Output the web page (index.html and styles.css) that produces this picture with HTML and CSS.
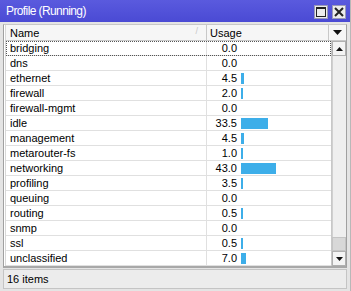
FILE: index.html
```html
<!DOCTYPE html>
<html>
<head>
<meta charset="utf-8">
<link rel="stylesheet" href="styles.css">
</head>
<body>
<div class="win">
  <div class="title">
    <span class="title-text">Profile (Running)</span>
    <div class="tbtns">
      <span class="tbtn"><svg width="10" height="10" viewBox="0 0 10 10"><rect x="0.5" y="0.5" width="9" height="9" fill="none" stroke="#222" stroke-width="1"/><rect x="0" y="0" width="10" height="2" fill="#222"/></svg></span>
      <span class="tbtn"><svg width="10" height="10" viewBox="0 0 10 10"><path d="M1 1 L9 9 M9 1 L1 9" stroke="#222" stroke-width="2"/></svg></span>
    </div>
  </div>
  <div class="main">
    <div class="table">
      <div class="head">
        <div class="hname">Name<span class="sort">/</span></div>
        <div class="husage">Usage</div>
        <div class="hcorner"><svg width="9" height="5" viewBox="0 0 9 5"><path d="M0 0 H9 L4.5 5 Z" fill="#111"/></svg></div>
      </div>
      <div class="bodyrow">
        <div class="rows">
          <div class="row focus"><div class="cname">bridging</div><div class="cuse"><span class="num">0.0</span></div></div>
          <div class="row"><div class="cname">dns</div><div class="cuse"><span class="num">0.0</span></div></div>
          <div class="row"><div class="cname">ethernet</div><div class="cuse"><span class="num">4.5</span><span class="bar" style="width:3px"></span></div></div>
          <div class="row"><div class="cname">firewall</div><div class="cuse"><span class="num">2.0</span><span class="bar" style="width:2px"></span></div></div>
          <div class="row"><div class="cname">firewall-mgmt</div><div class="cuse"><span class="num">0.0</span></div></div>
          <div class="row"><div class="cname">idle</div><div class="cuse"><span class="num">33.5</span><span class="bar" style="width:27px"></span></div></div>
          <div class="row"><div class="cname">management</div><div class="cuse"><span class="num">4.5</span><span class="bar" style="width:3px"></span></div></div>
          <div class="row"><div class="cname">metarouter-fs</div><div class="cuse"><span class="num">1.0</span><span class="bar" style="width:2px"></span></div></div>
          <div class="row"><div class="cname">networking</div><div class="cuse"><span class="num">43.0</span><span class="bar" style="width:35px"></span></div></div>
          <div class="row"><div class="cname">profiling</div><div class="cuse"><span class="num">3.5</span><span class="bar" style="width:2px"></span></div></div>
          <div class="row"><div class="cname">queuing</div><div class="cuse"><span class="num">0.0</span></div></div>
          <div class="row"><div class="cname">routing</div><div class="cuse"><span class="num">0.5</span><span class="bar" style="width:2px"></span></div></div>
          <div class="row"><div class="cname">snmp</div><div class="cuse"><span class="num">0.0</span></div></div>
          <div class="row"><div class="cname">ssl</div><div class="cuse"><span class="num">0.5</span><span class="bar" style="width:2px"></span></div></div>
          <div class="row"><div class="cname">unclassified</div><div class="cuse"><span class="num">7.0</span><span class="bar" style="width:5px"></span></div></div>
        </div>
        <div class="vscroll">
          <div class="sbtn"><svg width="7" height="4" viewBox="0 0 7 4"><path d="M3.5 0 L7 4 H0 Z" fill="#111"/></svg></div>
          <div class="track"></div>
          <div class="thumb"></div>
          <div class="sbtn"><svg width="7" height="4" viewBox="0 0 7 4"><path d="M0 0 H7 L3.5 4 Z" fill="#111"/></svg></div>
        </div>
      </div>
    </div>
    <div class="status">16 items</div>
  </div>
</div>
</body>
</html>
```

FILE: styles.css
```css
html, body {
  margin: 0;
  padding: 0;
}
body {
  width: 351px;
  height: 291px;
  background: #e4e4e4;
  font-family: "Liberation Sans", Arial, sans-serif;
  font-size: 11px;
  color: #000;
  overflow: hidden;
}
.win {
  display: flex;
  flex-direction: column;
  height: 291px;
  box-sizing: border-box;
  border-right: 1px solid #b8b8b8;
}
.title {
  height: 22px;
  background: linear-gradient(#5a5ade, #4a4ad4);
  display: flex;
  align-items: center;
  justify-content: space-between;
  padding: 0 4px 0 6px;
  box-sizing: border-box;
}
.title-text {
  color: #fff;
  font-size: 12px;
  letter-spacing: -0.6px;
}
.tbtns {
  display: flex;
  gap: 4px;
  padding-top: 2px;
}
.tbtn {
  width: 12px;
  height: 12px;
  background: #ececec;
  border: 1px solid #9a9ab8;
  display: flex;
  align-items: center;
  justify-content: center;
}
.main {
  flex: 1;
  display: flex;
  flex-direction: column;
  padding: 2px 3px 2px 3px;
}
.table {
  border-left: 1px solid #a0a0a0;
  border-top: 1px solid #c8c8c8;
  border-right: 1px solid #a0a0a0;
  border-bottom: 2px solid #a8a8a8;
  background: #fff;
  display: flex;
  flex-direction: column;
}
.head {
  height: 16px;
  display: flex;
  background: #f6f6f6;
  border-bottom: 1px solid #c8c8c8;
  box-sizing: border-box;
  margin-left: 1px;
  border-left: 1px solid #d8d8d8;
}
.hname {
  width: 201px;
  padding-left: 4px;
  padding-top: 1px;
  box-sizing: border-box;
  border-right: 1px solid #c8c8c8;
  display: flex;
  align-items: center;
  position: relative;
}
.sort {
  position: absolute;
  right: 8px;
  top: 1px;
  color: #c8c8c8;
  font-size: 9px;
}
.husage {
  width: 122px;
  padding-left: 3px;
  padding-top: 1px;
  box-sizing: border-box;
  border-right: 1px solid #c8c8c8;
  display: flex;
  align-items: center;
}
.hcorner {
  flex: 1;
  display: flex;
  align-items: center;
  justify-content: center;
}
.bodyrow {
  display: flex;
}
.rows {
  width: 325px;
  margin-left: 1px;
  border-left: 1px solid #d8d8d8;
  border-right: 1px solid #c8c8c8;
}
.row {
  height: 15px;
  display: flex;
  border-bottom: 1px solid #e0e0e0;
  box-sizing: border-box;
}
.row.focus {
  outline: 1px dotted #555;
  outline-offset: -1px;
}
.cname {
  width: 201px;
  padding-left: 4px;
  padding-top: 1px;
  box-sizing: border-box;
  border-right: 1px solid #e0e0e0;
  line-height: 13px;
}
.cuse {
  flex: 1;
  display: flex;
  align-items: center;
}
.num {
  width: 30px;
  text-align: right;
  padding-top: 1px;
  line-height: 13px;
}
.bar {
  margin-left: 4px;
  height: 11px;
  background: #3daee9;
}
.vscroll {
  flex: 1;
  display: flex;
  flex-direction: column;
  background: #efefef;
}
.sbtn {
  height: 15px;
  border: 1px solid #b0b0b0;
  box-sizing: border-box;
  background: #f4f4f4;
  display: flex;
  align-items: center;
  justify-content: center;
}
.track {
  flex: 1;
  border-left: 1px solid #d0d0d0;
}
.thumb {
  height: 14px;
  background: #d8d8d8;
  border: 1px solid #c4c4c4;
  box-sizing: border-box;
}
.status {
  margin-top: 1px;
  flex: 1;
  border: 1px solid #c4c4c4;
  background: #ececec;
  padding-left: 3px;
  display: flex;
  align-items: center;
}
```
